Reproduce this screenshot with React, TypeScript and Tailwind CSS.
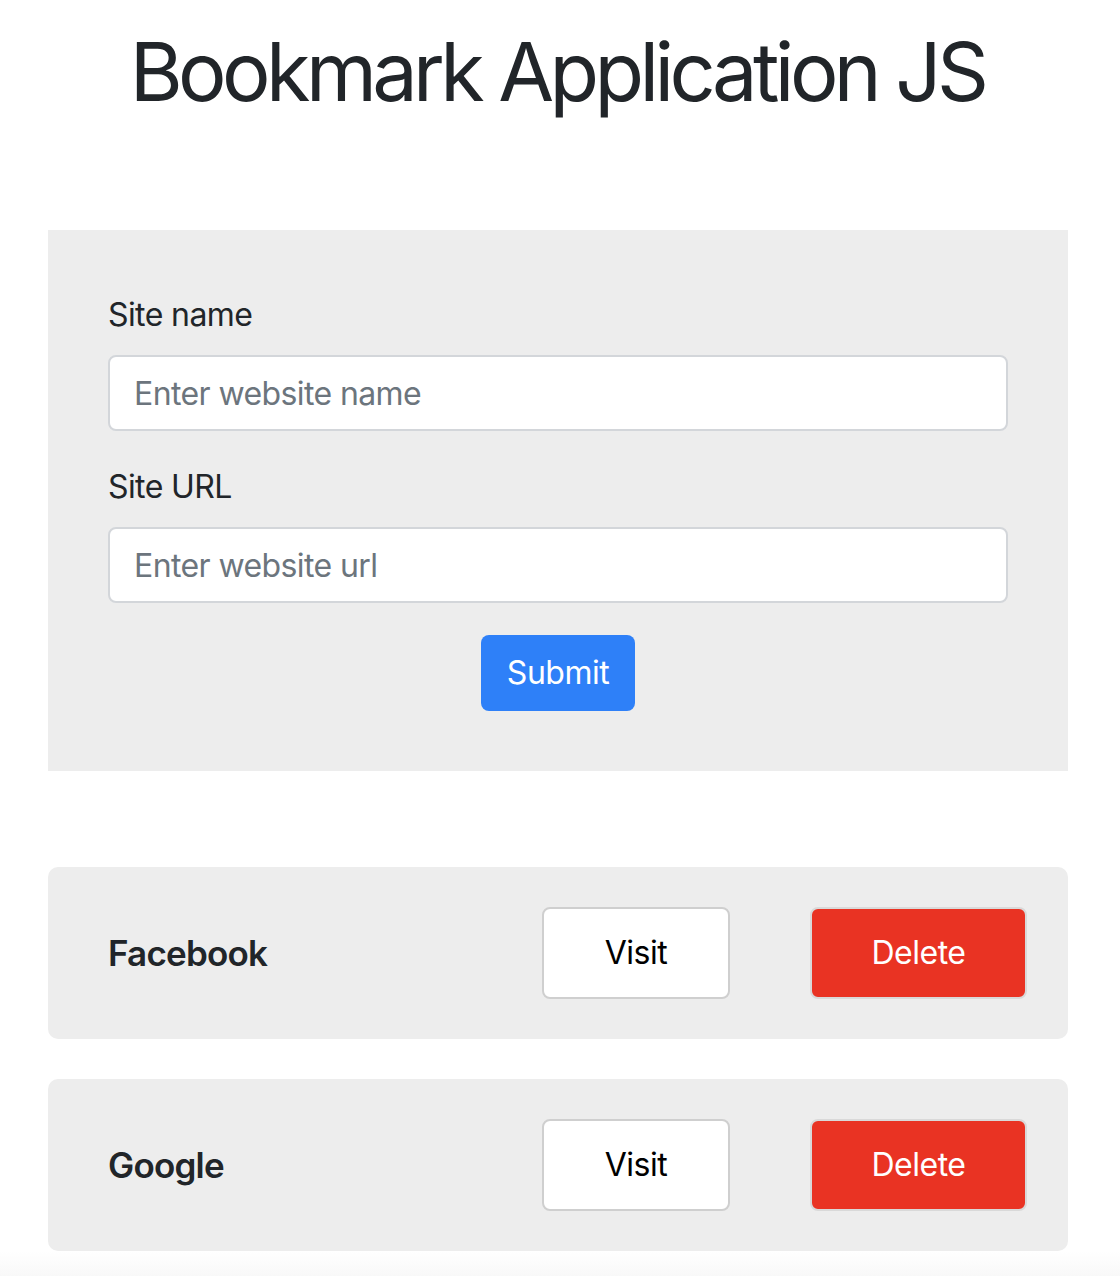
const bookmarks = [
  { name: 'Facebook', url: 'https://facebook.com' },
  { name: 'Google', url: 'https://google.com' },
]

function Field({ label, placeholder }: { label: string; placeholder: string }) {
  return (
    <div className="mb-8">
      <label className="block mb-4 text-[32px] leading-[48px] tracking-[-0.6px] text-[#212529]">{label}</label>
      <input
        type="text"
        placeholder={placeholder}
        className="block w-full h-[76px] px-6 bg-white border-2 border-[#d3d6da] rounded-lg text-[32px] tracking-[-0.6px] text-[#212529] placeholder:text-[#6c757d] outline-none"
      />
    </div>
  )
}

export default function App() {
  return (
    <div className="min-h-[1276px] bg-white flex flex-col font-['Inter',sans-serif] text-[#212529]">
      <h1 className="pt-[21px] pr-[6px] text-center text-[81px] leading-[103px] font-normal tracking-[-4.6px]">
        Bookmark Application JS
      </h1>

      <div className="ml-12 mr-[52px] mt-[106px]">
        <form className="bg-[#ededed] px-[60px] pt-[61px] pb-[60px]" onSubmit={e => e.preventDefault()}>
          <Field label="Site name" placeholder="Enter website name" />
          <Field label="Site URL" placeholder="Enter website url" />
          <div className="flex justify-center">
            <button
              type="submit"
              className="h-[76px] w-[154px] rounded-lg bg-[#2e80f8] text-white text-[32px] tracking-[-0.5px]"
            >
              Submit
            </button>
          </div>
        </form>

        <div className="mt-24 flex flex-col gap-10">
          {bookmarks.map(b => (
            <div
              key={b.name}
              className="h-[172px] rounded-[10px] bg-[#ededed] pl-[60px] pr-[41px] flex items-center"
            >
              <h5 className="flex-1 text-[35px] font-semibold tracking-[-0.8px]">{b.name}</h5>
              <button
                type="button"
                className="h-[92px] w-[188px] rounded-lg bg-white border-2 border-[#cfcfcf] text-black text-[32px] tracking-[-0.5px]"
              >
                Visit
              </button>
              <button
                type="button"
                className="ml-20 h-[92px] w-[217px] rounded-lg bg-[#e93323] border-2 border-[#d9d9d9] text-white text-[32px] tracking-[-0.5px]"
              >
                Delete
              </button>
            </div>
          ))}
        </div>
      </div>

      <div className="mt-auto h-[26px] bg-gradient-to-b from-white to-[#f8f8f8]" />
    </div>
  )
}
